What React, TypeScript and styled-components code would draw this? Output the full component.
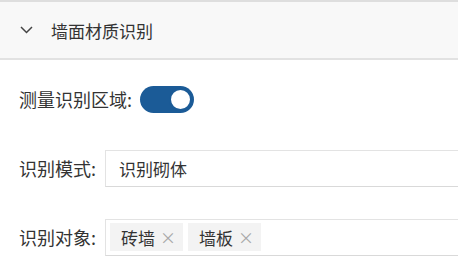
import React, { useState } from "react";
import styled, { createGlobalStyle } from "styled-components";

const GlobalStyle = createGlobalStyle`
	html, body {
		margin: 0;
		padding: 0;
		overflow: hidden;
		background: #ffffff;
		font-family: "Noto Sans CJK SC", "Noto Sans", sans-serif;
		color: #333333;
	}
`;

const Panel = styled.div`
	width: 458px;
	height: 279px;
	overflow: hidden;
`;

const Header = styled.div`
	display: flex;
	align-items: center;
	height: 56px;
	padding-left: 20px;
	gap: 18px;
	background: #f8f8f8;
	border-top: 2px solid #dedede;
	border-bottom: 2px solid #e2e2e2;
	font-size: 17px;
	color: #333333;
`;

const Form = styled.div`
	display: flex;
	flex-direction: column;
	gap: 31px;
	padding: 20px 0 0 19px;
`;

const Row = styled.div`
	display: flex;
	align-items: center;
	height: 38px;
`;

const Label = styled.span<{ $gap?: number }>`
	font-size: 18px;
	color: #333333;
	white-space: nowrap;
	margin-right: ${({ $gap }) => $gap ?? 9}px;
`;

const Switch = styled.button<{ $on: boolean }>`
	position: relative;
	width: 54px;
	height: 27px;
	border: none;
	border-radius: 14px;
	padding: 0;
	background: ${({ $on }) => ($on ? "#1b5b97" : "#c8c8c8")};
	cursor: pointer;

	&::after {
		content: "";
		position: absolute;
		top: 2px;
		left: ${({ $on }) => ($on ? "29px" : "2px")};
		width: 19px;
		height: 19px;
		border-radius: 50%;
		background: #ffffff;
		border: 2px solid ${({ $on }) => ($on ? "#1b5b97" : "#c8c8c8")};
	}
`;

const Field = styled.div`
	display: flex;
	align-items: center;
	gap: 5px;
	flex-shrink: 0;
	width: 400px;
	height: 37px;
	box-sizing: border-box;
	border: 1px solid #e3e3e3;
	border-bottom-color: #d9d9d9;
	padding: 0 4px;
	font-size: 17px;
	color: #333333;
`;

const Value = styled.span`
	padding-left: 9px;
`;

const Tag = styled.span`
	display: inline-flex;
	align-items: center;
	gap: 5px;
	height: 28px;
	padding: 0 7px 0 11px;
	background: #f3f3f3;
	font-size: 17px;
	color: #333333;
`;

const Close = styled.span`
	font-size: 16px;
	color: #a8a8a8;
`;

function Chevron() {
	return (
		<svg width="13" height="8" viewBox="0 0 13 8" fill="none">
			<path d="M1 1l5.5 5.5L12 1" stroke="#444" strokeWidth="1.5" />
		</svg>
	);
}

export default function App() {
	const [on, setOn] = useState(true);
	const tags = ["砖墙", "墙板"];

	return (
		<Panel>
			<GlobalStyle />
			<Header>
				<Chevron />
				<span>墙面材质识别</span>
			</Header>
			<Form>
				<Row>
					<Label $gap={8}>测量识别区域:</Label>
					<Switch $on={on} onClick={() => setOn(!on)} />
				</Row>
				<Row>
					<Label>识别模式:</Label>
					<Field>
						<Value>识别砌体</Value>
					</Field>
				</Row>
				<Row>
					<Label>识别对象:</Label>
					<Field>
						{tags.map((t) => (
							<Tag key={t}>
								{t}
								<Close>×</Close>
							</Tag>
						))}
					</Field>
				</Row>
			</Form>
		</Panel>
	);
}
